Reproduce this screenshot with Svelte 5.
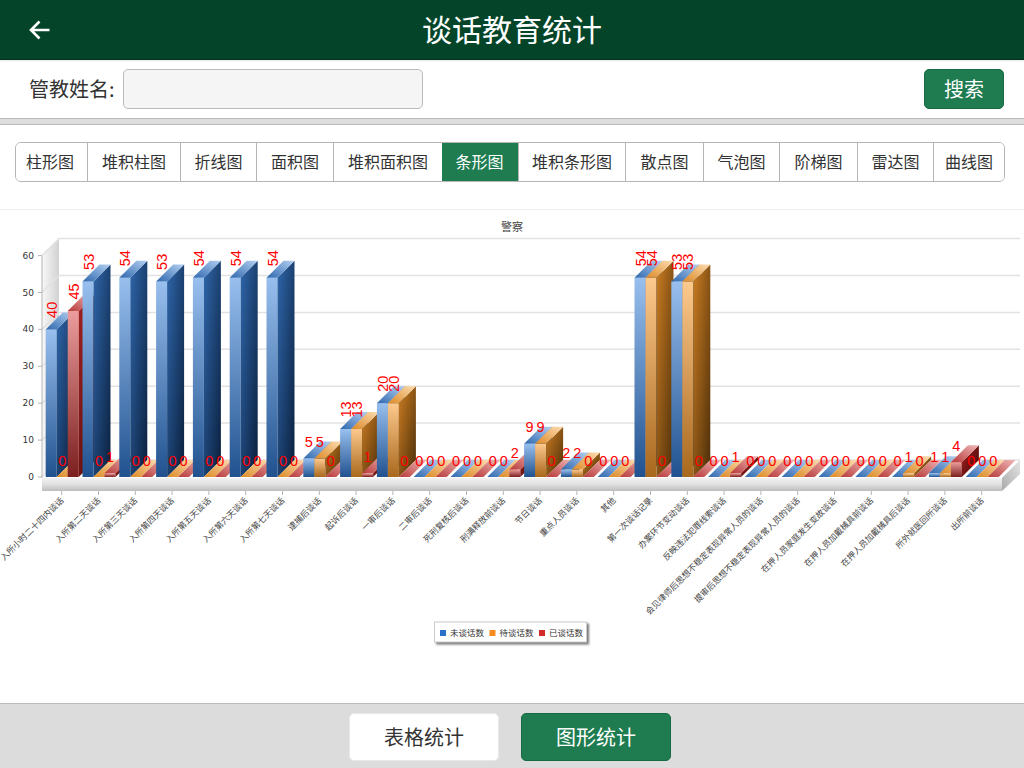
<script>
    const tabs = ['柱形图', '堆积柱图', '折线图', '面积图', '堆积面积图', '条形图', '堆积条形图', '散点图', '气泡图', '阶梯图', '雷达图', '曲线图'];
    let activeTab = '条形图';
    let activeView = '图形统计';

    // [label, 未谈话数, 待谈话数, 已谈话数]
    const rows = [
        ['入所小时二十四内谈话', 40, 0, 45],
        ['入所第二天谈话', 53, 0, 1],
        ['入所第三天谈话', 54, 0, 0],
        ['入所第四天谈话', 53, 0, 0],
        ['入所第五天谈话', 54, 0, 0],
        ['入所第六天谈话', 54, 0, 0],
        ['入所第七天谈话', 54, 0, 0],
        ['逮捕后谈话', 5, 5, 0],
        ['起诉后谈话', 13, 13, 1],
        ['一审后谈话', 20, 20, 0],
        ['二审后谈话', 0, 0, 0],
        ['死刑复核后谈话', 0, 0, 0],
        ['刑满释放前谈话', 0, 0, 2],
        ['节日谈话', 9, 9, 0],
        ['重点人员谈话', 2, 2, 0],
        ['其他', 0, 0, 0],
        ['第一次谈话记录', 54, 54, 0],
        ['办案环节变动谈话', 53, 53, 0],
        ['反映违法犯罪线索谈话', 0, 0, 1],
        ['会见律师后思想不稳定表现异常人员的谈话', 0, 0, 0],
        ['提审后思想不稳定表现异常人员的谈话', 0, 0, 0],
        ['在押人员家庭发生变故谈话', 0, 0, 0],
        ['在押人员加戴械具前谈话', 0, 0, 0],
        ['在押人员加戴械具后谈话', 0, 1, 0],
        ['所外就医回所谈话', 1, 1, 4],
        ['出所前谈话', 0, 0, 0]
    ];

    const series = ['blue', 'orange', 'red'];
    const legend = [['未谈话数', '#2a70c8', 440], ['待谈话数', '#f58a1e', 489.500], ['已谈话数', '#d42a2a', 539]];
    const ticks = [0, 10, 20, 30, 40, 50, 60];

    // chart geometry, in px inside the svg
    const base = 268;
    const unit = 3.69;
    const depth = 17;
    const barW = 11;
    const step = 36.8;
    const left = 45.7;
    const yOf = (v) => base - v * unit;
    const xOf = (i, s) => left + step * i + barW * s;

    const pts = (list) => list.map((p) => p.join(',')).join(' ');
</script>

<div class="page">
    <header class="topbar">
        <svg class="back" viewBox="0 0 22 20" width="22" height="20" aria-label="返回">
            <path d="M20.5 10H2M10.5 1.5 2 10l8.500 8.500" fill="none" stroke="#fff" stroke-width="2.600" />
        </svg>
        <h1>谈话教育统计</h1>
    </header>

    <div class="search">
        <label for="name">管教姓名:</label>
        <input id="name" type="text" />
        <button type="button">搜索</button>
    </div>

    <div class="tabsWrap">
        <div class="tabs">
            {#each tabs as tab}
                <button type="button" class:active={tab === activeTab} on:click={() => (activeTab = tab)}>{tab}</button>
            {/each}
        </div>
    </div>

    <main class="chart">
        <svg width="1024" height="494" viewBox="0 209 1024 494" role="img">
            <defs>
                <linearGradient id="wall" x1="0" x2="1" y1="0" y2="0">
                    <stop offset="0" stop-color="#f8f8f8" />
                    <stop offset="1" stop-color="#d2d2d2" />
                </linearGradient>
                <linearGradient id="floorFront" x1="0" x2="0" y1="0" y2="1">
                    <stop offset="0" stop-color="#f2f2f2" />
                    <stop offset="0.45" stop-color="#e2e2e2" />
                    <stop offset="1" stop-color="#bdbdbd" />
                </linearGradient>
                <linearGradient id="floorSide" x1="0" x2="1" y1="1" y2="0">
                    <stop offset="0" stop-color="#aaa" />
                    <stop offset="1" stop-color="#e4e4e4" />
                </linearGradient>

                <linearGradient id="blue-front" x1="0" x2="0" y1="0" y2="1">
                    <stop offset="0" stop-color="#98bfee" />
                    <stop offset="1" stop-color="#21528f" />
                </linearGradient>
                <linearGradient id="blue-side" x1="0" x2="1" y1="0" y2="1">
                    <stop offset="0" stop-color="#2f66aa" />
                    <stop offset="1" stop-color="#0a1f3c" />
                </linearGradient>
                <linearGradient id="blue-top" x1="0" x2="1" y1="1" y2="0">
                    <stop offset="0" stop-color="#2f68ae" />
                    <stop offset="1" stop-color="#b4d0f2" />
                </linearGradient>

                <linearGradient id="orange-front" x1="0" x2="0" y1="0" y2="1">
                    <stop offset="0" stop-color="#fdc98d" />
                    <stop offset="1" stop-color="#a9681d" />
                </linearGradient>
                <linearGradient id="orange-side" x1="0" x2="1" y1="0" y2="1">
                    <stop offset="0" stop-color="#cb7d22" />
                    <stop offset="1" stop-color="#4b2d09" />
                </linearGradient>
                <linearGradient id="orange-top" x1="0" x2="1" y1="1" y2="0">
                    <stop offset="0" stop-color="#dd8a26" />
                    <stop offset="1" stop-color="#fcdcb2" />
                </linearGradient>

                <linearGradient id="red-front" x1="0" x2="0" y1="0" y2="1">
                    <stop offset="0" stop-color="#ec9c9c" />
                    <stop offset="1" stop-color="#7c1f1f" />
                </linearGradient>
                <linearGradient id="red-side" x1="0" x2="1" y1="0" y2="1">
                    <stop offset="0" stop-color="#a62222" />
                    <stop offset="1" stop-color="#400505" />
                </linearGradient>
                <linearGradient id="red-top" x1="0" x2="1" y1="1" y2="0">
                    <stop offset="0" stop-color="#b83a3a" />
                    <stop offset="1" stop-color="#f0b8b8" />
                </linearGradient>
            </defs>

            <line class="chartTop" x1="0" x2="1024" y1="209" y2="209" />
            <text class="title" x="512" y="230.500">警察</text>

            <!-- walls -->
            <polygon points={pts([[42, 256], [59, 239], [59, 460], [42, 477]])} fill="url(#wall)" />
            {#each ticks as t}
                <polyline class="grid" points={pts([[42, yOf(t) + 209], [59, yOf(t) + 192], [1020, yOf(t) + 192]])} />
                <line class="axis" x1="38" x2="42" y1={yOf(t) + 209} y2={yOf(t) + 209} />
                <text class="yLabel" x="34" y={yOf(t) + 212}>{t}</text>
            {/each}
            <line class="axis" x1="42" x2="42" y1="256" y2="478" />

            <!-- floor -->
            <polygon points={pts([[42, 478], [1002, 478], [1002, 491], [42, 491]])} fill="url(#floorFront)" />
            <polygon points={pts([[1002, 478], [1020, 460], [1020, 474], [1002, 491]])} fill="url(#floorSide)" />

            <!-- bars -->
            <g transform="translate(0 209)">
                {#each rows as row, i}
                    {#each series as s, k}
                        {@const v = row[k + 1]}
                        {@const x = xOf(i, k)}
                        {@const y = yOf(v)}
                        {#if v > 0}
                            <rect x={x} y={y} width={barW} height={base - y} fill="url(#{s}-front)" />
                            <polygon points={pts([[x + barW, y], [x + barW + depth, y - depth], [x + barW + depth, base - depth], [x + barW, base]])} fill="url(#{s}-side)" />
                        {/if}
                        <polygon points={pts([[x, y], [x + barW, y], [x + barW + depth, y - depth], [x + depth, y - depth]])} fill="url(#{s}-top)" />
                    {/each}
                {/each}

                <!-- value labels sit above all the bars -->
                {#each rows as row, i}
                    {#each series as s, k}
                        {@const v = row[k + 1]}
                        {@const cx = xOf(i, k) + barW / 2}
                        {#if v > 9}
                            <text class="value" transform="translate({cx + 5.500} {yOf(v) - 11.500}) rotate(-90)">{v}</text>
                        {:else}
                            <text class="value mid" x={cx} y={yOf(v) - 11.500}>{v}</text>
                        {/if}
                    {/each}
                {/each}

                <!-- category ticks and labels -->
                {#each rows as row, i}
                    {@const tx = 61.700 + step * i}
                    <line class="axis" x1={tx} x2={tx} y1="282" y2="286" />
                    <text class="cat" transform="translate({tx + 2.500} {292}) rotate(-45)">{row[0]}</text>
                {/each}
            </g>

            <!-- legend -->
            <rect class="legendBox" x="434.500" y="622" width="152" height="20" />
            {#each legend as item}
                <rect x={item[2]} y="630" width="6" height="6" fill={item[1]} />
                <text class="legendText" x={item[2] + 10} y="635.500">{item[0]}</text>
            {/each}
        </svg>
    </main>

    <footer class="bottom">
        {#each ['表格统计', '图形统计'] as view}
            <button type="button" class:active={view === activeView} on:click={() => (activeView = view)}>{view}</button>
        {/each}
    </footer>
</div>

<style>
    :global(body) {
        background: #fff;
    }

    .page {
        width: 1024px;
        height: 768px;
        display: flex;
        flex-direction: column;
        overflow: hidden;
        font-family: "Noto Sans CJK SC", "Liberation Sans", sans-serif;
        color: #333;
    }

    .topbar {
        flex: none;
        height: 60px;
        box-sizing: border-box;
        position: relative;
        display: flex;
        align-items: center;
        justify-content: center;
        background: #04452a;
        border-bottom: 1px solid #02301c;
        box-shadow: 0 1px 2px rgba(0, 0, 0, 0.1);
    }

    .topbar h1 {
        margin: 0 0 3px;
        color: #fff;
        font-size: 30px;
        line-height: 40px;
        font-weight: 400;
    }

    .back {
        position: absolute;
        left: 29px;
        top: 20px;
    }

    .search {
        flex: none;
        height: 58px;
        box-sizing: border-box;
        display: flex;
        align-items: center;
        padding: 0 20px 0 29px;
    }

    .search label {
        font-size: 20px;
        margin-right: 8px;
        padding-bottom: 2px;
    }

    .search input {
        width: 300px;
        height: 40px;
        box-sizing: border-box;
        background: #f5f5f5;
        border: 1px solid #bbb;
        border-radius: 5px;
    }

    .search button {
        margin-left: auto;
        width: 80px;
        height: 40px;
        padding: 0 0 2px;
        color: #fff;
        font: inherit;
        font-size: 20px;
        background: #1e7c50;
        border: 1px solid #186a43;
        border-radius: 5px;
    }

    .tabsWrap {
        flex: none;
        height: 91px;
        box-sizing: border-box;
        padding: 17px 19px 0 15px;
        border-top: 7px solid #ddd;
        position: relative;
    }

    .tabsWrap::before {
        content: "";
        position: absolute;
        left: 0;
        right: 0;
        top: -7px;
        height: 7px;
        box-sizing: border-box;
        border-top: 1px solid #bbb;
        border-bottom: 1px solid #bbb;
    }

    .tabs {
        display: grid;
        grid-template-columns: 71px 93px 76px 77px 109px 76px 107px 78px 76px 78px 76px 71px;
        height: 40px;
        box-sizing: border-box;
        border: 1px solid #b5b5b5;
        border-radius: 6px;
        overflow: hidden;
        width: 990px;
    }

    .tabs button {
        padding: 0 0 2px;
        color: #333;
        font: inherit;
        font-size: 16px;
        background: #fff;
        border: 0;
        border-left: 1px solid #b5b5b5;
    }

    .tabs button:first-child {
        border-left: 0;
        padding-right: 3px;
    }

    .tabs button.active {
        color: #fff;
        background: #1e7c50;
        border-left-color: #1e7c50;
        padding-right: 2px;
    }

    .chart {
        flex: 1;
        min-height: 0;
    }

    .chart svg {
        display: block;
    }

    .chartTop {
        stroke: #eee;
        stroke-width: 2;
    }

    .title {
        font-size: 11px;
        fill: #444;
        text-anchor: middle;
    }

    .grid {
        fill: none;
        stroke: #e2e2e2;
        stroke-width: 1.500;
    }

    .axis {
        stroke: #b4b4b4;
    }

    .yLabel {
        font-family: "DejaVu Sans", sans-serif;
        font-size: 9px;
        fill: #333;
        text-anchor: end;
    }

    .value {
        font-family: "Liberation Sans", sans-serif;
        font-size: 14.500px;
        fill: #f00;
    }

    .mid {
        text-anchor: middle;
    }

    .cat {
        font-size: 8.500px;
        fill: #444;
        text-anchor: end;
    }

    .legendBox {
        fill: #fff;
        stroke: #ccc;
        filter: drop-shadow(2px 2px 1px #777);
    }

    .legendText {
        font-size: 8.500px;
        fill: #333;
    }

    .bottom {
        flex: none;
        height: 65px;
        box-sizing: border-box;
        display: flex;
        justify-content: center;
        gap: 22px;
        padding: 9px 4px 0 0;
        background: #dcdcdc;
        border-top: 1px solid #bbb;
    }

    .bottom button {
        width: 150px;
        height: 48px;
        padding: 0 0 1px;
        color: #333;
        font: inherit;
        font-size: 20px;
        background: #fff;
        border: 1px solid #e8e8e8;
        border-radius: 5px;
    }

    .bottom button.active {
        color: #fff;
        background: #1e7c50;
        border-color: #186a43;
    }
</style>
